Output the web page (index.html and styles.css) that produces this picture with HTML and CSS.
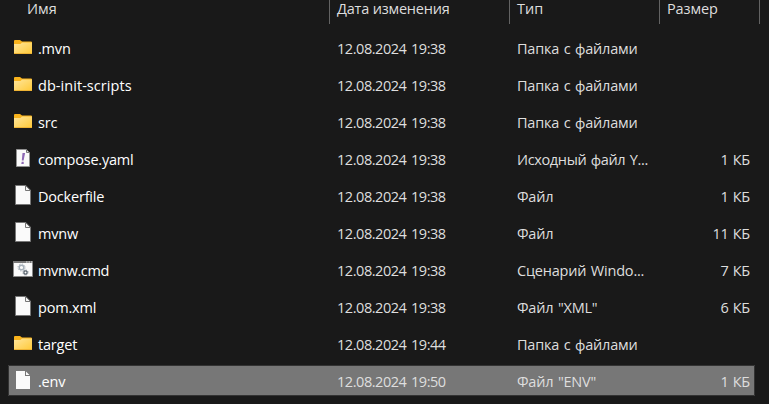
FILE: index.html
```html
<!DOCTYPE html>
<html lang="ru">
<head>
<meta charset="utf-8">
<title>Файлы</title>
<link rel="stylesheet" href="styles.css">
</head>
<body>
<svg class="defs" aria-hidden="true">
  <defs>
    <linearGradient id="paper" x1="0" y1="0" x2="1" y2="1"><stop offset="0" stop-color="#ffe69c"/><stop offset="1" stop-color="#ffc937"/></linearGradient>
    <symbol id="folder" viewBox="0 0 20 20">
      <path d="M1 4q0-1 1-1h5l2 1.500h9q1 0 1 1V8H1z" fill="#f9b31c"/>
      <path d="M1 7h6.500L9 5.500h10V17H1z" fill="url(#paper)"/>
      <path d="M1 16.500h18" stroke="#eeb334"/>
    </symbol>
    <symbol id="file" viewBox="0 0 20 20">
      <path d="M2.500.5h10.500l4.500 4.500v14.500h-15z" fill="#fafafa" stroke="#777"/>
      <path d="M13 0v5h5z" fill="#1a1a1a"/>
      <path d="M12.500.5V5.500h5z" fill="#f4f4f4" stroke="#777"/>
    </symbol>
    <symbol id="plain" viewBox="0 0 20 20">
      <path d="M3 1h9v5h5v13H3zM13 1.500L16.500 5H13z" fill="#fafafa"/>
    </symbol>
    <symbol id="yaml" viewBox="0 0 20 20">
      <path d="M3.500 1.500h10l3 3v14h-13z" fill="#fafafa" stroke="#929292"/>
      <path d="M13.500 1.500v3h3z" fill="#ddd" stroke="#777"/>
      <path d="M9.500 5h2.600L10.600 12.500H8.800zM8.700 13.800h2v2.200H8.300z" fill="#8e68b5"/>
    </symbol>
    <symbol id="script" viewBox="0 0 20 20">
      <path d="M.5 2.500h19v15H.5z" fill="#fafafa" stroke="#888"/>
      <path d="M0 2h20v2H0z" fill="#777"/>
      <path d="M13 3h1.500m1 0H17m1 0h1" stroke="#e0e0e0"/>
      <circle cx="8.500" cy="8.500" r="2.300" fill="none" stroke="#a6b0b9" stroke-width="1.400"/>
      <circle cx="8.500" cy="8.500" r="3.500" fill="none" stroke="#a6b0b9" stroke-width="1" stroke-dasharray="1.300 1.450"/>
      <circle cx="12.500" cy="13.500" r="1.600" fill="none" stroke="#56616b" stroke-width="1.200"/>
      <circle cx="12.500" cy="13.500" r="2.500" fill="none" stroke="#56616b" stroke-width=".8" stroke-dasharray="1 .960"/>
    </symbol>
  </defs>
</svg>
<main class="list">
  <header class="head"><span class="h-name">Имя</span><span class="h-date">Дата изменения</span><span class="h-type">Тип</span><span class="h-size">Размер</span></header>
  <div class="row"><svg class="icon"><use href="#folder"/></svg><span class="name">.mvn</span><span class="date">12.08.2024 19:38</span><span class="type">Папка с файлами</span><span class="size"></span></div>
  <div class="row"><svg class="icon"><use href="#folder"/></svg><span class="name loose">db-init-scripts</span><span class="date">12.08.2024 19:38</span><span class="type">Папка с файлами</span><span class="size"></span></div>
  <div class="row"><svg class="icon"><use href="#folder"/></svg><span class="name">src</span><span class="date">12.08.2024 19:38</span><span class="type">Папка с файлами</span><span class="size"></span></div>
  <div class="row"><svg class="icon"><use href="#yaml"/></svg><span class="name">compose.yaml</span><span class="date">12.08.2024 19:38</span><span class="type tight">Исходный файл Y...</span><span class="size">1 КБ</span></div>
  <div class="row"><svg class="icon"><use href="#file"/></svg><span class="name">Dockerfile</span><span class="date">12.08.2024 19:38</span><span class="type">Файл</span><span class="size">1 КБ</span></div>
  <div class="row"><svg class="icon"><use href="#file"/></svg><span class="name">mvnw</span><span class="date">12.08.2024 19:38</span><span class="type">Файл</span><span class="size">11 КБ</span></div>
  <div class="row"><svg class="icon"><use href="#script"/></svg><span class="name tight">mvnw.cmd</span><span class="date">12.08.2024 19:38</span><span class="type">Сценарий Windo...</span><span class="size">7 КБ</span></div>
  <div class="row"><svg class="icon"><use href="#file"/></svg><span class="name">pom.xml</span><span class="date">12.08.2024 19:38</span><span class="type">Файл "XML"</span><span class="size">6 КБ</span></div>
  <div class="row"><svg class="icon"><use href="#folder"/></svg><span class="name">target</span><span class="date">12.08.2024 19:44</span><span class="type">Папка с файлами</span><span class="size"></span></div>
  <div class="row selected"><svg class="icon"><use href="#plain"/></svg><span class="name">.env</span><span class="date">12.08.2024 19:50</span><span class="type">Файл "ENV"</span><span class="size">1 КБ</span></div>
</main>
</body>
</html>
```
FILE: styles.css
```css
* { box-sizing: border-box; }
body {
  margin: 0;
  height: 404px;
  overflow: hidden;
  background: #191919;
  color: #dedede;
  font: 14.5px/20px "Open Sans", "Noto Sans", sans-serif;
}
.defs { position: absolute; width: 0; height: 0; }
.list { width: 769px; }
.head {
  display: grid;
  grid-template-columns: 330px 180px 150px 100px;
  height: 24px;
  margin-bottom: 8px;
}
.head span {
  padding-left: 7px;
  border-right: 1px solid #636363;
  line-height: 18px;
  white-space: nowrap;
}
.head .h-name { padding-left: 27px; }
.h-date { letter-spacing: -.2px; }
.h-size { letter-spacing: -.1px; }
.row {
  display: grid;
  grid-template-columns: 25px 299px 180px 150px 83px;
  align-items: center;
  width: 747px;
  height: 33px;
  margin: 0 0 4px 8px;
  padding-left: 5px;
  white-space: nowrap;
}
.icon { display: block; width: 20px; height: 20px; margin-top: -3px; }
.name { color: #fff; letter-spacing: -.2px; }
.loose { letter-spacing: .05px; }
.date { letter-spacing: -.45px; word-spacing: 1.2px; }
.type { letter-spacing: -.2px; word-spacing: 1px; }
.row .tight { letter-spacing: -.35px; }
.size { text-align: right; letter-spacing: -.2px; word-spacing: .5px; }
.selected {
  height: 31px;
  padding-top: 2px;
  background: #777;
  box-shadow: inset 0 0 0 1px #333;
  border-radius: 1px;
}
```
